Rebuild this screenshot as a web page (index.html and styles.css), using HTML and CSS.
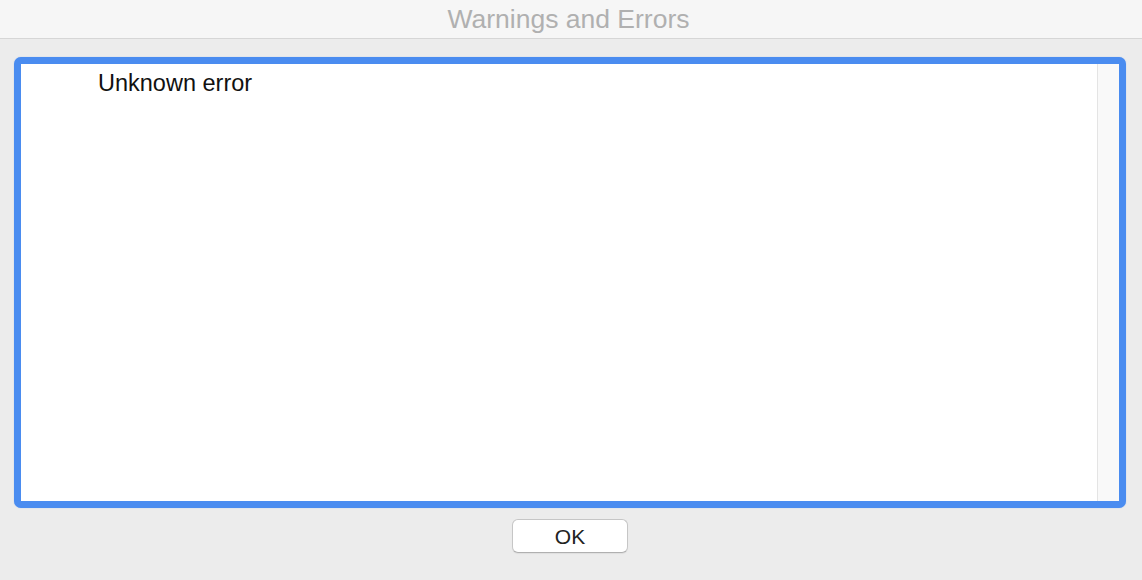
FILE: index.html
```html
<!DOCTYPE html>
<html lang="en">
<head>
<meta charset="utf-8">
<title>Warnings and Errors</title>
<link rel="stylesheet" href="styles.css">
</head>
<body>
<div class="window">
  <header class="titlebar">Warnings and Errors</header>
  <main class="content">
    <div class="list-frame">
      <div class="list">
        <div class="list-items">
          <div class="item">Unknown error</div>
        </div>
        <div class="scroll-track"></div>
      </div>
    </div>
    <div class="actions">
      <button class="btn">OK</button>
    </div>
  </main>
</div>
</body>
</html>
```

FILE: styles.css
```css
html, body {
  margin: 0;
  padding: 0;
  height: 100%;
}
body {
  background: #ececec;
  font-family: "Liberation Sans", Arial, sans-serif;
}
.window {
  display: flex;
  flex-direction: column;
  height: 580px;
}
.titlebar {
  height: 38px;
  background: #f6f6f6;
  border-bottom: 1px solid #d6d6d6;
  color: #b0b0b0;
  font-size: 26.5px;
  line-height: 38px;
  text-align: center;
  padding-right: 5px;
}
.content {
  display: flex;
  flex-direction: column;
  padding: 18px 16px 0 14px;
}
.list-frame {
  height: 437px;
  border: 7px solid #4a8cf0;
  border-radius: 7px;
  background: #fff;
  box-shadow: 0 0 1px rgba(74, 140, 240, 0.6);
}
.list {
  display: flex;
  height: 100%;
}
.list-items {
  flex: 1;
  padding: 6px 0 0 77px;
}
.item {
  font-size: 23.5px;
  line-height: 27px;
  color: #111;
}
.scroll-track {
  width: 21px;
  background: #f9f9f9;
  border-left: 1px solid #e4e4e4;
}
.actions {
  display: flex;
  justify-content: center;
  padding-top: 11px;
}
.btn {
  width: 116px;
  height: 34px;
  background: #fff;
  border: 1px solid #c6c6c6;
  border-bottom-color: #b0b0b0;
  border-radius: 6px;
  box-shadow: 0 1px 1px rgba(0,0,0,0.06);
  font-family: "Liberation Sans", Arial, sans-serif;
  font-size: 21px;
  color: #222;
  padding: 2px 0 0 0;
}
```
